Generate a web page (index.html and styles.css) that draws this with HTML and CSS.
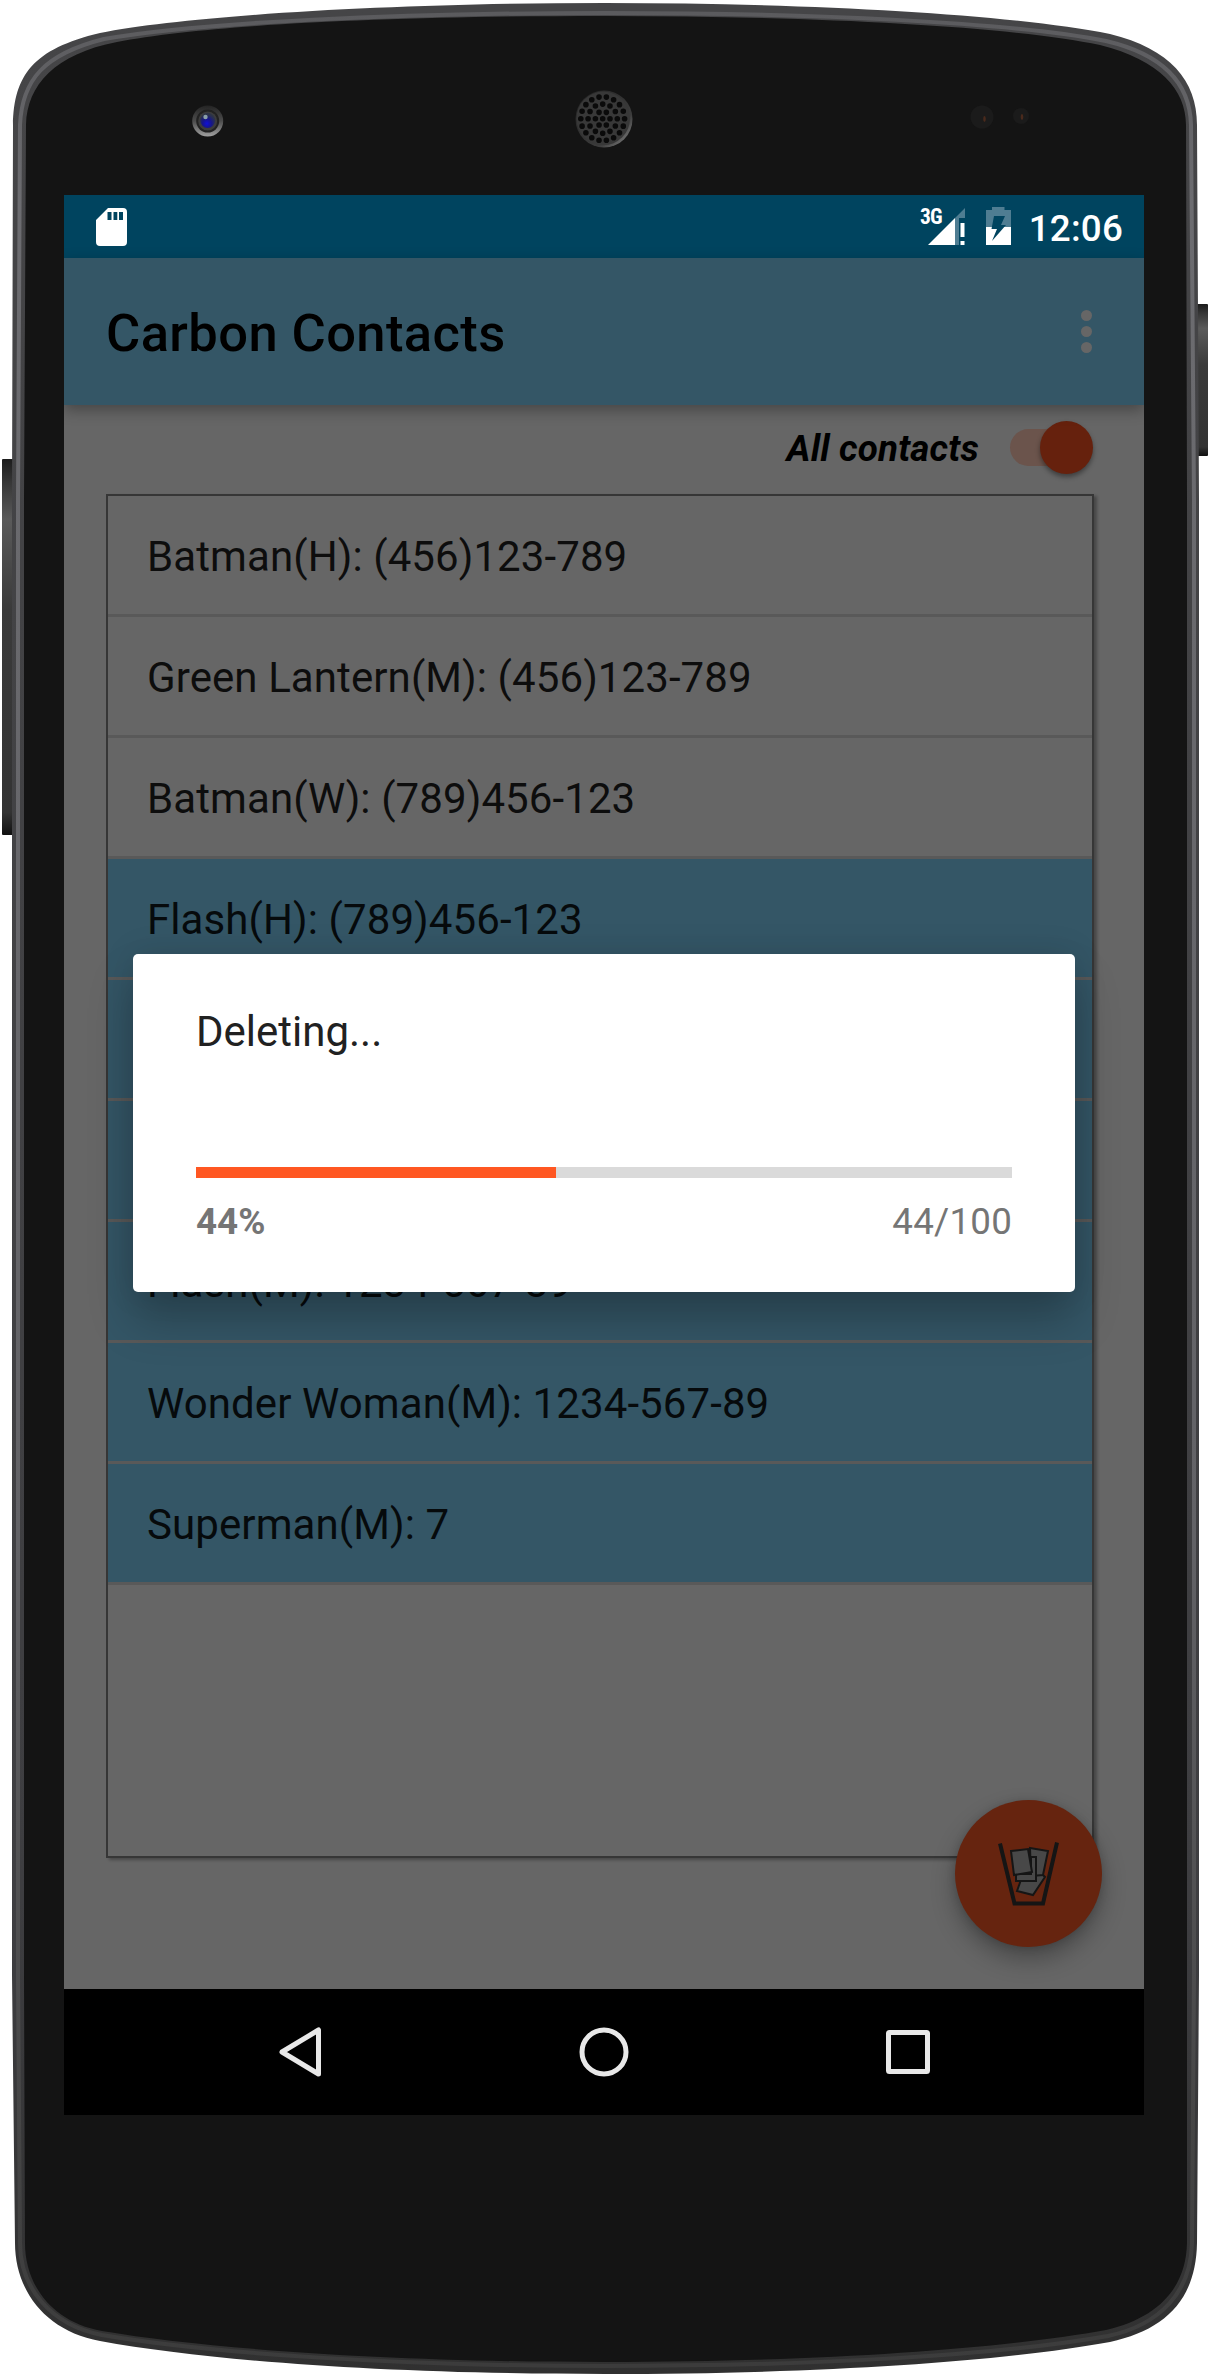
FILE: index.html
```html
<!DOCTYPE html>
<html lang="en">
<head>
<meta charset="utf-8">
<title>Carbon Contacts</title>
<link rel="stylesheet" href="styles.css">
</head>
<body>
<div class="phone">
  <svg class="frame" viewBox="0 0 1210 2375" aria-hidden="true">
    <defs>
      <linearGradient id="rim" x1="0" y1="0" x2="0" y2="1">
        <stop offset="0" stop-color="#454547"/><stop offset=".8" stop-color="#3e3e41"/><stop offset="1" stop-color="#303030"/>
      </linearGradient>
      <linearGradient id="shine" x1="0" y1="0" x2="0" y2="1">
        <stop offset="0" stop-color="#5b5b5e"/><stop offset=".08" stop-color="#6c6c70"/><stop offset=".65" stop-color="#626266"/><stop offset=".9" stop-color="#454545"/><stop offset="1" stop-color="#3c3c3c"/>
      </linearGradient>
      <linearGradient id="key" x1="0" y1="0" x2="0" y2="1">
        <stop offset="0" stop-color="#1c1c1c"/><stop offset=".06" stop-color="#363636"/><stop offset=".16" stop-color="#5a5a5a"/><stop offset=".4" stop-color="#3a3a3a"/><stop offset=".94" stop-color="#333"/><stop offset="1" stop-color="#111"/>
      </linearGradient>
      <linearGradient id="lens" x1="0" y1="0" x2="0" y2="1">
        <stop offset="0" stop-color="#242424"/><stop offset=".5" stop-color="#4c4c4c"/><stop offset="1" stop-color="#a0a0a0"/>
      </linearGradient>
      <radialGradient id="iris" cx=".45" cy=".7" r=".6">
        <stop offset="0" stop-color="#1010d8"/><stop offset=".5" stop-color="#16168a"/><stop offset="1" stop-color="#2c3348"/>
      </radialGradient>
      <linearGradient id="grille" x1="0" y1="0" x2="1" y2="1">
        <stop offset="0" stop-color="#222"/><stop offset=".7" stop-color="#3c3c3c"/><stop offset="1" stop-color="#909090"/>
      </linearGradient>
    </defs>
    <rect x="2" y="459" width="14" height="376" rx="1" fill="url(#key)"/>
    <rect x="1194" y="304" width="14" height="152" rx="1" fill="url(#key)"/>
    <path fill="url(#rim)" d="M12 500 L13 125 C14 75 33 49 100 33 C190 15 400 3 605 3 C810 3 1010 14 1110 34 C1170 49 1197 80 1197 125 L1199 500 V1975 L1197 2243 C1196 2300 1165 2330 1110 2342 C1000 2362 820 2374 605 2374 C400 2374 215 2362 100 2341 C45 2331 15 2290 15 2243 L12 1975 Z"/>
    <path fill="none" stroke="url(#shine)" stroke-width="4" d="M18 500 L20 125 C22 80 44 54 104 39 C200 22 400 13 605 13 C810 13 1010 22 1106 41 C1166 55 1190 85 1191 125 L1194 500 V1975 L1192 2243 C1191 2292 1160 2325 1108 2336 C1000 2355 820 2366 605 2366 C400 2366 215 2354 102 2335 C50 2325 20 2287 20 2243 L18 1975 Z"/>
    <path fill="#141414" d="M24 500 L26 125 C27 85 55 54 117 42 C210 24 400 16 605 16 C810 16 1010 26 1100 45 C1160 60 1186 90 1186 125 L1187 500 V1975 L1187 2243 C1186 2288 1158 2318 1106 2330 C1000 2349 820 2362 605 2362 C400 2362 215 2350 102 2331 C52 2322 25 2285 25 2243 L24 1975 Z"/>
    <circle cx="207.7" cy="121" r="15.5" fill="url(#lens)"/>
    <circle cx="207.7" cy="121" r="11.5" fill="#222"/>
    <circle cx="207.7" cy="121" r="9.5" fill="#3c3c3c"/>
    <circle cx="207.7" cy="120.5" r="7.5" fill="url(#iris)"/>
    <circle cx="205.500" cy="117" r="2.200" fill="#8ba0a8"/>
    <circle cx="982" cy="117" r="11.500" fill="#1b1b1b"/><ellipse cx="984.500" cy="119" rx="1.300" ry="3" fill="#4a2a1c"/>
    <circle cx="1021" cy="116" r="8" fill="#1b1b1b"/><ellipse cx="1022" cy="117" rx="1.300" ry="3" fill="#4a2a1c"/>
    <circle cx="604" cy="119" r="28.500" fill="url(#grille)"/>
    <circle cx="603.200" cy="118.400" r="26.800" fill="#383838"/>
    <g fill="none" stroke="#0a0a0a" stroke-width="5.600" stroke-linecap="round" stroke-dasharray="0 1">
      <circle cx="602.700" cy="118.700" r="2.800" fill="#0a0a0a" stroke="none"/>
      <circle cx="602.700" cy="118.700" r="7.300" pathLength="6"/>
      <circle cx="602.700" cy="118.700" r="14.600" pathLength="12"/>
      <circle cx="602.700" cy="118.700" r="21.900" pathLength="18"/>
    </g>
  </svg>

  <main class="screen">
    <header class="status">
      <svg class="sd" viewBox="0 0 31 38"><path fill="#fff" fill-rule="evenodd" d="M12 0H27q4 0 4 4V34q0 4-4 4H4q-4 0-4-4V12ZM11.500 4v8h4v-8ZM17.500 4v8h3.800v-8ZM23 4v8h4v-8Z"/></svg>
      <span class="net">3G</span>
      <svg class="signal" viewBox="0 0 37 37"><path fill="#4f7d92" d="M37 0V10H31V37H27V10Z"/><path fill="#fff" d="M0 37L27 10V37ZM32.500 15H36.500V29H32.500ZM32.500 33H36.500V37H32.500Z"/></svg>
      <svg class="battery" viewBox="0 0 25 38"><path fill="#4f7d92" d="M6 0H18.500V3H25V20H0V3H6Z"/><path fill="#fff" d="M0 20H25V38H0Z"/><path fill="#00445f" d="M8 9H19L15 18H20L6 34L11 22H5.500Z"/></svg>
      <time class="clock">12:06</time>
    </header>

    <header class="appbar">
      <h1>Carbon Contacts</h1>
      <div class="more"><i></i><i></i><i></i></div>
    </header>

    <section class="content">
      <div class="filter">
        <label>All contacts</label>
        <div class="switch"><i></i></div>
      </div>
      <ul class="list">
        <li>Batman(H): (456)123-789</li>
        <li>Green Lantern(M): (456)123-789</li>
        <li>Batman(W): (789)456-123</li>
        <li class="on">Flash(H): (789)456-123</li>
        <li class="on"></li>
        <li class="on"></li>
        <li class="on">Flash(M): 1234-567-89</li>
        <li class="on">Wonder Woman(M): 1234-567-89</li>
        <li class="on">Superman(M): 7</li>
      </ul>
      <div class="fab">
        <svg viewBox="0 0 147 147" stroke="#151515">
          <g fill="#484848" stroke-width="2">
            <path d="M62 91L67 77L86 73L90 77L78 95Z"/>
            <path d="M75 48L93 51L88 75L76 76Z"/>
            <path d="M61 74H76V57H81V81H61Z"/>
            <path d="M56 51L73 49L77 72L59 75Z"/>
          </g>
          <path fill="none" stroke-width="4" d="M45 43.500L59.500 103.500H88L102 42.500"/>
        </svg>
      </div>
    </section>

    <nav class="navbar">
      <svg viewBox="0 0 1080 126" fill="none" stroke="#e8e8e8" stroke-width="5">
        <path stroke-linejoin="round" d="M254.500 41V85L218 63Z"/>
        <circle cx="540" cy="63" r="22"/>
        <rect x="824.500" y="43.500" width="39" height="39" rx="1"/>
      </svg>
    </nav>

    <div class="dialog" role="dialog">
      <p class="message">Deleting...</p>
      <div class="track"><div class="bar" style="width:44.100%"></div></div>
      <div class="figures"><b>44%</b><span>44/100</span></div>
    </div>
  </main>
</div>
</body>
</html>
```
FILE: styles.css
```css
* { box-sizing: border-box; }
body {
  margin: 0;
  background: #fff;
  font-family: Roboto, "Liberation Sans", sans-serif;
}
.phone {
  position: relative;
  width: 1210px;
  height: 2375px;
  padding: 195px 66px 260px 64px;
}
.frame { position: absolute; inset: 0; width: 1210px; height: 2375px; }
.screen {
  position: relative;
  display: flex;
  flex-direction: column;
  width: 1080px;
  height: 1920px;
  overflow: hidden;
}
.status {
  display: flex;
  align-items: flex-start;
  flex: 0 0 63px;
  height: 63px;
  padding: 0 21px 0 32px;
  background: #00445f;
  color: #fff;
}
.sd { width: 31px; height: 38px; margin-top: 13px; margin-right: auto; }
.net { font: 700 21.500px/24px "Roboto Condensed", Roboto, sans-serif; margin-top: 10px; margin-right: -14px; letter-spacing: -.8px; }
.signal { width: 37px; height: 37px; margin-top: 13px; margin-right: 21px; }
.battery { width: 25px; height: 38px; margin-top: 12px; margin-right: 18px; }
.clock { font-size: 36.750px; font-weight: 500; line-height: 59px; margin-top: 4px; letter-spacing: .2px; }
.appbar {
  position: relative;
  z-index: 1;
  display: flex;
  align-items: center;
  justify-content: space-between;
  flex: 0 0 147px;
  padding: 0 52px 0 42px;
  background: #345666;
  box-shadow: 0 5px 14px rgba(0, 0, 0, .32);
}
h1 { margin: 3px 0 0; font-size: 52.500px; font-weight: 500; line-height: 62px; letter-spacing: .4px; color: #000; }
.more { display: flex; flex-direction: column; gap: 5px; }
.more i { width: 11px; height: 11px; border-radius: 50%; background: #666; }
.content {
  position: relative;
  flex: 1;
  padding: 0 50px 0 42px;
  background: #666;
}
.filter {
  display: flex;
  align-items: center;
  justify-content: flex-end;
  height: 89px;
  gap: 31px;
}
.filter label { margin-bottom: 2px; font-size: 36.750px; font-weight: 700; font-style: italic; letter-spacing: .15px; color: #000; }
.switch {
  width: 76px;
  height: 37px;
  margin: 0 8px 4px 0;
  border-radius: 19px;
  background: #6b544c;
  display: flex;
  align-items: center;
  justify-content: flex-end;
}
.switch i {
  flex: none;
  width: 53px;
  height: 53px;
  margin-right: -7px;
  border-radius: 50%;
  background: #66210d;
  box-shadow: 0 3px 5px rgba(0, 0, 0, .4);
}
.list {
  height: 1364px;
  margin: 0;
  padding: 0;
  list-style: none;
  border: 2px solid #363636;
  box-shadow: 3px 2px 3px rgba(0, 0, 0, .3);
}
.list li {
  height: 121px;
  padding: 2px 0 0 39px;
  border-bottom: 3px solid #595959;
  font-size: 42px;
  line-height: 118px;
  letter-spacing: .09px;
  color: #0d0d0d;
}
.list .on { background: #345666; background-clip: padding-box; color: #060a0c; }
.fab {
  position: absolute;
  left: 891px;
  top: 1395px;
  width: 147px;
  height: 147px;
  border-radius: 50%;
  background: #66240f;
  box-shadow: 0 12px 24px rgba(0, 0, 0, .3), 0 1px 8px rgba(0, 0, 0, .15);
}
.fab svg { display: block; width: 147px; height: 147px; }
.navbar { flex: 0 0 126px; background: #000; }
.navbar svg { display: block; width: 1080px; height: 126px; }
.dialog {
  position: absolute;
  z-index: 2;
  left: 69px;
  top: 759px;
  width: 942px;
  height: 338px;
  padding: 50px 63px 0;
  border-radius: 5px;
  background: #fff;
  box-shadow: 0 28px 46px rgba(0, 0, 0, .24), 0 0 34px rgba(0, 0, 0, .1);
}
.message { margin: 0; font-size: 42px; line-height: 56px; color: #212121; }
.track { height: 11px; margin-top: 107px; background: #dadada; }
.bar { height: 11px; background: #ff5722; }
.figures {
  display: flex;
  justify-content: space-between;
  margin-top: 22px;
  font-size: 36.750px;
  line-height: 43px;
  color: #757575;
}
.figures span { letter-spacing: .2px; }
```
